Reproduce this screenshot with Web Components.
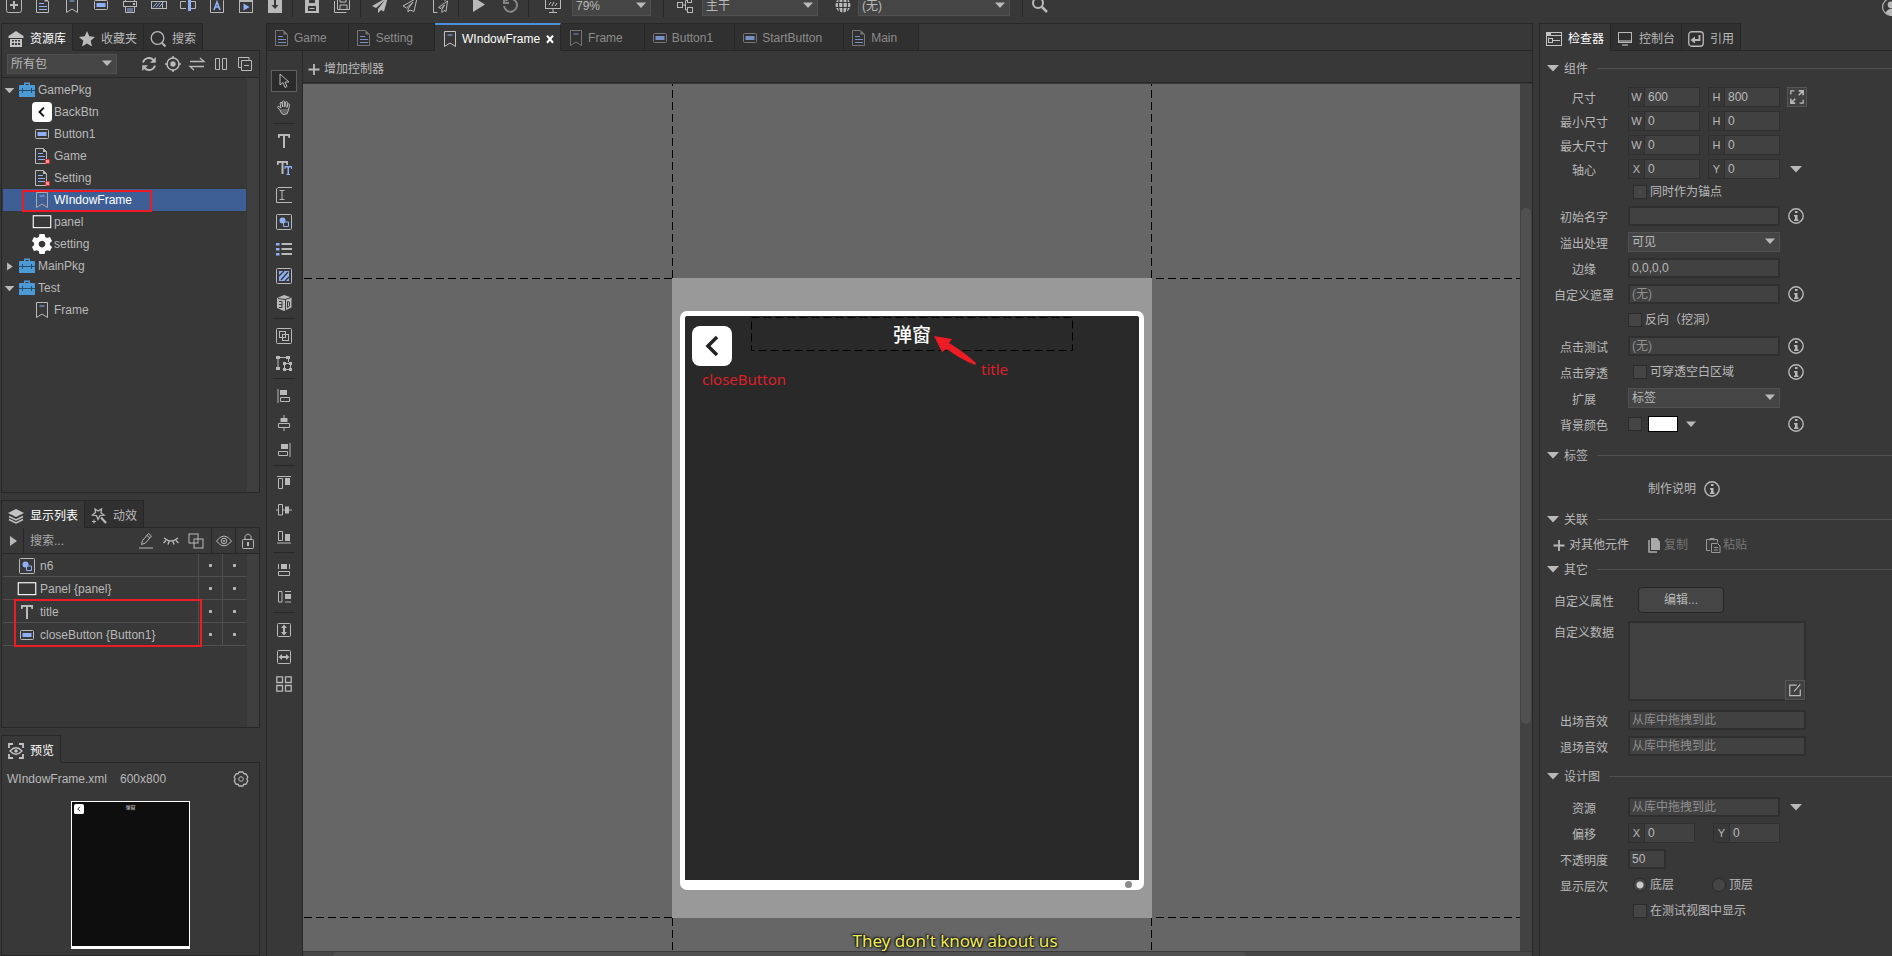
<!DOCTYPE html>
<html lang="zh-CN">
<head>
<meta charset="utf-8">
<title>UI Editor</title>
<style>
  html, body { margin: 0; height: 100%; background: #383838; }
  body {
    font: 12px/16px "Liberation Sans", "Noto Sans CJK SC", sans-serif;
    color: #b9b9b9; overflow: hidden;
    --line: #272727; --bg: #383838; --tab: #303030; --field: #414141;
    --edge: #2f2f2f; --rule: #505050; --accent: #8fb0f6; --mark: #ed1c24;
  }
</style>
</head>
<body>
<editor-app></editor-app>
<script>
const A = 'stroke="#8fb0f6" fill="none"';
const AF = 'fill="#8fb0f6" stroke="none"';
const F = 'fill="currentColor" stroke="none"';
const ICONS = {
  newbox: `<rect x=".5" y=".5" width="15" height="15" rx="2"/><path d="M8 4v8M4 8h8" stroke-width="2"/>`,
  doc: `<path d="M1.5.5h8l4 4v11h-12z"/><path d="M9.500 0l4.500 4.500h-4.500z" ${F}/><path ${A} d="M4 6.500h5M4 9.500h8M4 12.500h8"/>`,
  docdot: `<path d="M1.500.500h8l3 3.500v11.500h-11z"/><path d="M9 0l4 4h-4z" ${F}/><path ${A} d="M4 5.500h5M4 8.500h7M4 11.500h7"/><rect x="11.500" y="11.500" width="4" height="4" rx="1" fill="#f99" stroke="#f22"/>`,
  bookmark: `<path d="M2.500.500h11v15l-5.500-3.500-5.500 3.500z"/><path ${A} d="M5.500 4h5"/>`,
  button: `<rect x="1.500" y="3.500" width="13" height="9" rx="1"/><rect x="3.500" y="6" width="9" height="4" ${AF}/>`,
  combo: `<path d="M3.500 4v-3.500h9v3.500"/><rect x="1.500" y="4.500" width="13" height="5"/><path ${F} d="M11 6h2v2h-2z"/><path d="M3.500 9.500v6h9v-6"/><path ${A} d="M5 12h6M5 14h6"/>`,
  progress: `<rect x=".5" y="4.500" width="15" height="7"/><path ${A} d="M2 10.500l4-5M5 10.500l4-5M8 10.500l3-4"/><path d="M11.500 5v6"/>`,
  slider: `<path d="M6 4.500h-5.500v7h5.500M11 4.500h4.500v7h-4.500"/><path ${AF} d="M8 3h3v11h-3z"/>`,
  font: `<path d="M1.500.500h10l3 3v12h-13z"/><path ${A} stroke-width="1.600" d="M5 13l3-8 3 8M6 10h4"/>`,
  movie: `<rect x="1.500" y="2.500" width="13" height="13"/><path ${F} d="M1 0h3v3h-3zM6 0h3v3h-3zM11 0h3v3h-3zM1 3h14v2h-14z"/><path ${AF} d="M5.500 6.500l6 3.500-6 3.500z"/>`,
  download: `<path ${F} d="M1 0h14v16h-14z"/><path stroke="#383838" stroke-width="2" d="M8 3v6"/><path fill="#383838" stroke="none" d="M4.500 8h7l-3.500 4z"/>`,
  save: `<path ${F} fill-rule="evenodd" d="M1 0h12l2 2v14h-14zM5 1v5h6v-5zM4 9v5h8v-5z"/><path d="M5.500 11.500h5"/>`,
  saveall: `<path d="M3.500 1.500h10l2 2v9h-12zM6 2v3h6v-3M6 12v-4h7v4"/><path d="M.5 4v11.500h12"/>`,
  plane: `<path ${F} d="M16 0L0 9l4 2 9-8-7 9v4l3-3 3 1.500z"/>`,
  planeo: `<path d="M15 1L1 9l3.500 2 6.500-6-5 7v3l2-2 4 1.500z"/>`,
  docplane: `<path d="M8 .5h-6.500v15h4M13 1v3"/><path d="M15.500 4l-9 6.500 2.500 1 3.500-3.500-2.500 4.500v3l2-2 2 1z"/>`,
  play: `<path ${F} d="M2 0v15l12-7.500z"/>`,
  undo: `<path opacity=".6" stroke-width="2" d="M3.500 4a6.500 6.500 0 1 1-1.500 5M2 1v5h5"/>`,
  screen: `<rect x=".5" y="2.500" width="15" height="9"/><path d="M4 8l2-3M7 9l2-4M10 9l2-3M8 12v3M4 15.500h8"/>`,
  branch: `<rect x=".5" y="5.500" width="5" height="5"/><rect x="10.500" y="1.500" width="4" height="4"/><rect x="10.500" y="10.500" width="5" height="5"/><path d="M6 8h2.500M8.500 4v9h2M8.500 3.500h2"/>`,
  globe: `<circle cx="8" cy="8" r="7.500" ${F}/><path stroke="#383838" stroke-width="1.200" d="M8 0v16M0 5.500h16M0 10.500h16M5 .500q-3 7.500 0 15M11 .500q3 7.500 0 15"/>`,
  find: `<circle cx="6" cy="6" r="5" stroke-width="2"/><path stroke-width="2.500" d="M10 10l5 5"/>`,
  user: `<circle cx="8" cy="8" r="7.500"/><circle cx="8" cy="6" r="3" ${F}/><path ${F} d="M3 13q5-7 10 0l-5 3z"/>`,
  house: `<path ${F} fill-rule="evenodd" d="M8 0l7.500 5v2h-15v-2zM2 8h12v8h-12zM4 9v1.500h2v-1.500zM7 9v1.500h2v-1.500zM10 9v1.500h2v-1.500zM4 12v2h2v-2zM7 12v2h2v-2zM10 12v2h2v-2z"/>`,
  star: `<path ${F} d="M8 0l2.300 5.300 5.700.600-4.300 3.800 1.300 5.800-5-3-5 3 1.300-5.800-4.300-3.800 5.700-.600z"/>`,
  search: `<circle cx="7.500" cy="7" r="6.300" stroke-width="1.300"/><path stroke-width="2" d="M12 12l3.500 3.500"/>`,
  refresh: `<path stroke-width="1.900" d="M2 6.500a6.200 6.200 0 0 1 10.500-2.500M14 9.500a6.200 6.200 0 0 1-10.500 2.500"/><path ${F} d="M14.800 1v5.800h-5.800zM1.200 15v-5.800h5.800z"/>`,
  target: `<circle cx="8" cy="8" r="6" stroke-width="1.500"/><circle cx="8" cy="8" r="2.700" ${F}/><path stroke-width="1.500" d="M8 0v3M8 13v3M0 8h3M13 8h3"/>`,
  swap: `<path stroke-width="1.300" d="M1 5.500h14l-4-3.500M15 10.500h-14l4 3.500"/>`,
  columns: `<path d="M2.500 2.500h4v11h-4zM9.500 2.500h4v11h-4z"/>`,
  collapse: `<path d="M12 4v-2.500h-10.500v10h2.500"/><path d="M4.500 4.500h10v10h-10zM7 9.500h5"/>`,
  cursor: `<path d="M4 1v11l3-2.500 2 5 2-1-2-4.500h4z"/>`,
  hand: `<path d="M4 10l-2.500-2.500q0-1.500 1.500-1l2 1.500-1-5q1-1.500 2 0l.8 4-.3-5.500q1-1.200 2 0l.3 5.500.8-5q1.200-1 1.900.300l-.6 5.200 1-3.500q1.200-.800 1.700.500l-1.200 6q-.500 4-3.900 4h-1q-2 0-3.500-4.500z"/><path ${F} opacity=".35" d="M4 9h8.500l-1 4.500-3 1.500-2.500-1z"/>`,
  text: `<path ${F} d="M2 1h12v4h-1.500l-.500-2h-3v12h-2v-12h-3l-.500 2h-1.500z"/>`,
  rich: `<path ${F} d="M1 1h11v4h-1.500l-.500-2h-2.500v11h-2v-11h-2.500l-.500 2h-1.500z"/><path fill="#383838" stroke="none" d="M8 5.500h8v10h-8z"/><path ${AF} d="M8.500 6h7.500v3h-1v-1.500h-2v6.500h1v1h-3.500v-1h1v-6.500h-2v1.500h-1z"/>`,
  input: `<path d="M16 .500h-14l-1.500 1.500v13.500h15.500M3.500 3.500h5M3.500 12.500h5M6 3.500v9"/>`,
  group: `<rect x=".5" y=".5" width="15" height="15" rx="1"/><circle cx="6.500" cy="6.500" r="3" ${AF}/><path ${A} d="M8 8h4.500v4.500h-5v-3.500"/>`,
  list: `<path ${AF} d="M0 2h3.500v2.500h-3.500zM0 7h3.500v2.500h-3.500zM0 12h3.500v2.500h-3.500z"/><path ${F} d="M5.500 2h10.500v2h-10.500zM5.500 7h10.500v2h-10.500zM5.500 12h10.500v2h-10.500z"/>`,
  hatch: `<rect x=".5" y=".5" width="15" height="15" rx="1"/><rect x="3" y="3" width="10" height="10" ${AF}/><path stroke="#383838" stroke-width="1.400" d="M3 8l5-5M5 12l7-8M9 13l4-4"/>`,
  cube: `<path ${F} d="M1 3l7-3 7.500 2.500v10l-7.500 3.500-7-3z"/><path stroke="#383838" d="M2 3.500l7 1 6-2M9.500 4.500v11M3 6.500h3v6h-3M3 9.500h3M11.500 6.500v6l2-1.500v-4z"/>`,
  overlap: `<rect x="1" y="1" width="9" height="9"/><rect x="6" y="6" width="9" height="9"/>`,
  boxover: `<rect x=".5" y=".5" width="15" height="15" rx="1"/><rect x="3.500" y="3.500" width="6" height="6"/><rect x="6.500" y="6.500" width="6" height="6"/>`,
  transform: `<path d="M2 3.500v10M3 2.500h8M12.500 3v4"/><path ${F} d="M0 1h4v3h-4zM10 1h4v3h-4zM0 12h4v3h-4z"/><rect x="8.500" y="8.500" width="6" height="6"/><path ${F} d="M7 7h3v3h-3zM13 7h3v3h-3zM7 13h3v3h-3zM13 13h3v3h-3z"/>`,
  alleft: `<path d="M2 1v14M4.500 9.500h9v4h-9z"/><path ${F} d="M4 2h7v5h-7z"/>`,
  alcenter: `<path d="M8 0v4M8 13v3M2.500 8.500h11v4h-11z"/><path ${F} d="M4.500 3h7v4h-7z"/>`,
  alright: `<path d="M14 1v14M2.500 9.500h9v4h-9z"/><path ${F} d="M5 2h7v5h-7z"/>`,
  altop: `<path d="M1 1.500h14M2.500 3.500h4v10h-4z"/><path ${F} d="M9 3h5v7h-5z"/>`,
  almid: `<path d="M0 8h3M7 8h9M2.500 2.500h4v10.500h-4z"/><path ${F} d="M9 4.500h4v7h-4z"/>`,
  albottom: `<path d="M1 14h14M2.500 2.500h4v9h-4z"/><path ${F} d="M9 5h5v7h-5z"/>`,
  disth: `<path d="M2.500 2v5M13.500 2v5M2.500 9.500h11v4h-11z"/><path ${F} d="M5 2h6v5h-6z"/>`,
  distv: `<path d="M9 2.500h6M9 13h6M2.500 2.500h3.500v10.500h-3.500z"/><path ${F} d="M9 5h6v5h-6z"/>`,
  sizev: `<rect x="1.500" y="1.500" width="13" height="13" rx="1"/><path stroke-width="2" d="M8 5v6"/><path ${F} d="M5 6l3-3.500 3 3.500zM5 10l3 3.500 3-3.500z"/>`,
  sizeh: `<rect x="1.500" y="1.500" width="13" height="13" rx="1"/><path stroke-width="2" d="M5 8h6"/><path ${F} d="M6 5l-3.500 3 3.500 3zM10 5l3.500 3-3.500 3z"/>`,
  four: `<path stroke-width="1.300" d="M.8.800h5.700v5.700h-5.700zM9.500.800h5.700v5.700h-5.700zM.8 9.500h5.700v5.700h-5.700zM9.500 9.500h5.700v5.700h-5.700z"/>`,
  box: `<path fill="#4d9bd6" stroke="none" d="M5 3v-2.500h6v2.500h4q1 0 1 1v4h-16v-4q0-1 1-1zM6.500 2v1h3v-1zM0 9h16v6h-16z"/><path stroke="#24506f" d="M3.500 6v5M12.500 6v5M0 8.500h16"/>`,
  back: `<rect width="16" height="16" rx="3" fill="#fff" stroke="none"/><path stroke="#111" stroke-width="1.500" d="M9.500 4.500l-3.500 3.500 3.500 3.500"/>`,
  panel: `<rect x="1" y="3" width="14" height="9.500" stroke="#fff" stroke-width=".9"/>`,
  cog: `<path fill="#fff" stroke="none" fill-rule="evenodd" d="M6 0h4l.6 2.300 1.500.8 2.300-.7 1.600 3.200-1.700 1.600v1.600l1.700 1.600-1.600 3.200-2.300-.7-1.500.8-.6 2.300h-4l-.6-2.300-1.500-.8-2.300.7-1.600-3.200 1.700-1.600v-1.600l-1.700-1.600 1.600-3.200 2.300.7 1.500-.8zM8 5.300a2.700 2.700 0 1 0 .01 0z"/>`,
  gear: `<path stroke-width="1.300" stroke-linejoin="round" d="M6 1h4l.8 1.800 2-.2 2 3.400-1 2 1 2-2 3.400-2-.2-.8 1.800h-4l-.8-1.800-2 .2-2-3.400 1-2-1-2 2-3.400 2 .2z"/><circle cx="8" cy="8" r="2.300"/>`,
  layers: `<path ${F} d="M8 1l8 4-8 4-8-4z"/><path stroke-width="1.500" d="M1 8.500l7 3.500 7-3.500M1 11.500l7 3.500 7-3.500"/>`,
  wand: `<path stroke-width="1.300" d="M4 1l3 2 3.500-2-.5 4 3 2-4 .500-2 4-1.500-4-4-.500 3-2.500z"/><path stroke-width="2.200" d="M10 9.500l5 5.500"/><path d="M3 11.500v4M1 13.500h4"/>`,
  pencil: `<path d="M3.500 11.500l1-4 6-7 3 2.500-6 7zM1 15h14M9 2.500l3 2.500"/>`,
  lash: `<path stroke-width="1.400" d="M1 5q7 6 14 0M3 7.500l-2.500 2.500M6 8.500l-1 3M10 8.500l1 3M13 7.500l2.500 2.500"/>`,
  eye: `<path d="M.5 8q7.500-10 15 0q-7.500 10-15 0z"/><circle cx="8" cy="8" r="2.800"/><circle cx="8" cy="8" r="1" ${F}/>`,
  lock: `<rect x="2.500" y="6.500" width="11" height="9" rx="1"/><path d="M5 6.500v-3q3-5 6 0v3"/><path stroke-width="2" d="M8 9v4"/>`,
  lookup: `<path stroke-width="1.800" d="M1 5v-4h4M11 1h4v4M15 11v4h-4M5 15h-4v-4"/><path stroke-width="1.300" d="M2 8q6-6.500 12 0q-6 6.500-12 0z"/><circle cx="8" cy="8" r="1.800" ${F}/>`,
  inspect: `<rect x=".5" y="1.500" width="15" height="13"/><path d="M0 4.500h16M2.500 6.500v5M7 9.500h7"/><rect x="2.500" y="7.500" width="4" height="4"/><path ${F} d="M1 2h4v2h-4z"/>`,
  monitor: `<rect x="1.500" y="1.500" width="13" height="10"/><path ${F} opacity=".6" d="M2 9h12v2h-12zM5 13h6v2h-6z"/>`,
  ref: `<rect x=".75" y=".75" width="14.500" height="14.500" rx="3" stroke-width="1.300"/><path stroke-width="1.800" d="M11.500 4v5h-6"/><path ${F} d="M7 5.500v7l-4.500-3.500z"/>`,
  info: `<circle cx="8" cy="8" r="7.200" stroke-width="1.400"/><path ${F} d="M7 3h2.500v2h-2.500zM6 7h3.500v4.500h1v1.500h-4.500v-1.500h1v-3h-1z"/>`,
  expand: `<path stroke-width="1.500" d="M1 5v-4h4M15 11v4h-4"/><path stroke-width="1.800" d="M10 1h5v5M15 1l-5 5M6 15h-5v-5M1 15l5-5"/>`,
  copy: `<path ${F} d="M5 1h6l3 3.500v8.500h-9z"/><path stroke-width="1.500" d="M3 3v12h8"/>`,
  paste: `<path d="M5 13.500h-3.500v-11h11v3M5 3.500v-2h4v2"/><path d="M6.500 6.500h6l2.500 2.500v6.500h-8.500zM9 10.500h4M9 13h4"/>`,
  plus: `<path stroke-width="1.800" d="M8 3v11M2.500 8.500h11"/>`,
  edit: `<path stroke-width="1.400" d="M10 2.500h-8v12h12v-7M7 9.500l7-8"/>`,
  close: `<path stroke-width="2.800" d="M4 3.500l8 9.500M12 3.500l-8 9.500"/>`,
  down: `<path ${F} d="M2 5h12l-6 6.500z"/>`,
  downs: `<path ${F} d="M3 5.500h10l-5 5.500z"/>`,
  right: `<path ${F} d="M5 3l7 5-7 5z"/>`
};

/* Registers an element whose shadow root is cloned from one template. */
function element(name, css, html, setup) {
  const template = document.createElement('template');
  template.innerHTML = `<style>*{box-sizing:border-box}:host([hidden]){display:none}${css}</style>${html}`;
  customElements.define(name, class extends HTMLElement {
    constructor() {
      super();
      this.attachShadow({ mode: 'open' }).append(template.content.cloneNode(true));
    }
    connectedCallback() { if (setup && !this.ready) { this.ready = true; setup(this, this.shadowRoot); } }
  });
}

const CONTROLS = `
  button{font:inherit;color:inherit;background:none;border:0;padding:0;margin:0;display:flex;align-items:center;justify-content:center}
  input,textarea,select{font:inherit;color:inherit;margin:0;border-radius:0;outline:0}
  ::placeholder{color:#8f8f8f;opacity:1}
`;

element('ui-icon',
  `:host{display:block;flex:none;width:var(--size,16px);height:var(--size,16px)}
   svg{display:block;width:100%;height:100%;overflow:visible}`,
  `<svg viewBox="0 0 16 16" fill="none" stroke="currentColor" aria-hidden="true"></svg>`,
  (host, root) => { root.querySelector('svg').innerHTML = ICONS[host.getAttribute('name')] || ''; });

element('ui-select', CONTROLS +
  `:host{display:block;position:relative;width:var(--w,152px);flex:none}
   select{appearance:none;display:block;width:100%;height:20px;background:#454545;border:1px solid #505050;padding:0 20px 0 3px}
   ui-icon{position:absolute;right:2px;top:1px;pointer-events:none}`,
  `<select><option></option></select><ui-icon name="downs"></ui-icon>`,
  (host, root) => {
    root.querySelector('option').textContent = host.getAttribute('value');
    root.querySelector('select').setAttribute('aria-label', host.getAttribute('label'));
  });

/* ---- top tool bar ---- */
element('tool-group', CONTROLS +
  `:host{display:flex}button{width:var(--step);height:24px}`, ``,
  (host, root) => host.getAttribute('icons').split(' ').forEach(n => {
    const b = document.createElement('button');
    b.title = n; b.innerHTML = `<ui-icon name="${n}"></ui-icon>`; root.append(b);
  }));

element('tool-bar',
  `:host{display:flex;align-items:flex-end;overflow:hidden}
   .row{display:flex;align-items:center;height:36px;flex:1;min-width:0;margin-left:-1px}
   i{width:1px;height:24px;background:var(--line);margin:0 4px 0 3px}
   ui-select{margin:2px 9px 0 0}
   .user{margin:4px -8px 0 auto}`,
  `<div class="row">
     <tool-group style="--step:29px" icons="newbox doc bookmark button combo progress slider font movie download"></tool-group><i></i>
     <tool-group style="--step:30px" icons="save saveall"></tool-group><i></i>
     <tool-group style="--step:30px" icons="plane planeo docplane"></tool-group><i></i>
     <tool-group style="--step:31px" icons="play undo"></tool-group><i></i>
     <tool-group style="--step:39px" icons="screen"></tool-group>
     <ui-select style="--w:79px" value="79%" label="缩放"></ui-select><i></i>
     <tool-group style="--step:34px" icons="branch"></tool-group>
     <ui-select style="--w:116px" value="主干" label="分支"></ui-select>
     <tool-group style="--step:31px" icons="globe"></tool-group>
     <ui-select style="--w:152px" value="(无)" label="语言"></ui-select><i></i>
     <tool-group style="--step:26px" icons="find"></tool-group>
     <ui-icon class="user" name="user" style="--size:18px"></ui-icon>
   </div>`);

/* ---- docked panels ---- */
element('dock-panel',
  `:host{display:flex;flex-direction:column;min-height:0;min-width:0}
   .tabs{display:flex;height:28px;flex:none;border-left:1px solid var(--line)}
   .rest{flex:1;border-bottom:1px solid var(--line)}
   .body{flex:1;min-height:0;display:flex;flex-direction:column;border:1px solid var(--line);border-top:0}
   :host([full]) .rest{border-top:1px solid var(--line);border-right:1px solid var(--line)}
   :host([open]) .body{border-bottom:0}
   :host([edge]) .body{border-right:0;border-bottom:0}`,
  `<div class="tabs" role="tablist"><slot name="tab"></slot><div class="rest"></div></div><div class="body"><slot></slot></div>`);

element('dock-tab', CONTROLS +
  `:host{display:flex}
   button{gap:6px;padding:3px 6px 0;white-space:nowrap;background:var(--tab);border:solid var(--line);border-width:1px 1px 1px 0}
   :host([active]) button{background:var(--bg);border-bottom-color:var(--bg);color:#fff}
   :host([active]) ui-icon{color:#c4c4c4}
   :host([doc]) button{gap:4px;padding:2px 21px 0 7px;color:#8c8c8c}
   :host([doc]) .lead{opacity:.75}
   :host([doc][active]) button{color:#fff;border-top:2px solid #4a90d9;padding-right:4px}
   :host([doc][active]) .lead{opacity:1}
   :host([doc][active]) .x{color:#fff;--size:12px}
   .x{display:none}:host([doc][active]) .x{display:block}`,
  `<button role="tab"><ui-icon class="lead"></ui-icon><slot></slot><ui-icon class="x" name="close"></ui-icon></button>`,
  (host, root) => {
    const old = root.querySelector('.lead'), icon = document.createElement('ui-icon');
    icon.className = 'lead'; icon.setAttribute('name', host.getAttribute('icon')); old.replaceWith(icon);
    root.querySelector('button').setAttribute('aria-selected', host.hasAttribute('active'));
  });

element('tree-row', CONTROLS +
  `:host{display:block;position:relative}
   button{width:100%;height:22px;justify-content:flex-start;padding-left:29px;gap:2px}
   .main{width:20px;display:grid;place-items:center}
   :host([folder]) button{padding-left:0;gap:3px}
   :host([folder]) .main{width:16px}
   .arrow{display:none;--size:13px}:host([folder]) .arrow{display:block}
   :host([selected]) button{background:#3e5f96;color:#fff}
   .mark{display:none;position:absolute;left:19px;top:1px;width:130px;height:22px;border:2px solid var(--mark)}
   :host([selected]) .mark{display:block}
   :host([selected]) .main{color:#aaa}`,
  `<button role="treeitem"></button><span class="mark"></span>`,
  (host, root) => {
    const g = k => host.getAttribute(k);
    root.querySelector('button').innerHTML =
      `<ui-icon class="arrow" name="${g('folder') || 'down'}"></ui-icon><span class="main"><ui-icon name="${g('icon')}" style="--size:${g('size') || 16}px"></ui-icon></span><span>${g('text')}</span>`;
  });

element('library-panel', CONTROLS +
  `:host{display:flex;flex-direction:column;flex:1;min-height:0}
   .filter{display:flex;align-items:center;height:27px;padding-left:5px;border-bottom:1px solid var(--line)}
   ui-select{--w:110px;margin-right:20px}
   .filter button{width:24px;height:24px}
   .tree{flex:1;display:grid;grid-template-columns:1fr 13px}
   .rows{padding:1px 0 0 1px}.track{background:#3f3f3f;margin-left:1px}`,
  `<div class="filter"><ui-select value="所有包" label="包"></ui-select>
     <button title="刷新"><ui-icon name="refresh"></ui-icon></button><button title="定位"><ui-icon name="target"></ui-icon></button>
     <button title="交换"><ui-icon name="swap"></ui-icon></button><button title="分栏"><ui-icon name="columns"></ui-icon></button>
     <button title="折叠"><ui-icon name="collapse"></ui-icon></button></div>
   <div class="tree"><div class="rows" role="tree">
     <tree-row folder="down" icon="box" text="GamePkg"></tree-row>
     <tree-row icon="back" size="20" text="BackBtn"></tree-row>
     <tree-row icon="button" text="Button1"></tree-row>
     <tree-row icon="docdot" text="Game"></tree-row>
     <tree-row icon="docdot" text="Setting"></tree-row>
     <tree-row icon="bookmark" text="WIndowFrame" selected></tree-row>
     <tree-row icon="panel" size="20" text="panel"></tree-row>
     <tree-row icon="cog" size="20" text="setting"></tree-row>
     <tree-row folder="right" icon="box" text="MainPkg"></tree-row>
     <tree-row folder="down" icon="box" text="Test"></tree-row>
     <tree-row icon="bookmark" text="Frame"></tree-row>
   </div><div class="track"></div></div>`);

element('display-list', CONTROLS +
  `:host{display:flex;flex-direction:column;flex:1;min-height:0}
   .head{display:flex;height:26px;border-bottom:1px solid var(--line)}
   .head button{width:25px}
   .head .go{width:22px;border-right:1px solid var(--line)}
   .head input{width:110px;flex:1;min-width:0;background:none;border:0;padding:0 6px}
   .head input::placeholder{color:#a8a8a8}
   .head .flag{width:24px;border-left:1px solid var(--line)}
   .head .ovl{margin-right:3px}
   .list{flex:1;display:grid;grid-template-columns:1fr 13px;align-items:stretch}
   .track{background:#3f3f3f;margin-left:1px}
   .wrap{position:relative;padding-left:1px}
   table{width:100%;border-spacing:0;table-layout:fixed}
   td{height:23px;padding:1px 0 0;border-bottom:1px solid var(--rule)}
   td+td{width:24px;border-left:1px solid var(--rule)}
   .item{display:flex;align-items:center;gap:3px;padding-left:14px}
   .ico{width:20px;height:20px;display:grid;place-items:center}
   .dot{width:3px;height:3px;border-radius:1px;background:#bbb;margin:auto}
   .mark{position:absolute;left:12px;top:45px;width:188px;height:48px;border:2px solid var(--mark)}`,
  `<div class="head"><button class="go" title="展开"><ui-icon name="right"></ui-icon></button>
     <input aria-label="搜索" placeholder="搜索...">
     <button title="编辑"><ui-icon name="pencil"></ui-icon></button><button title="隐藏"><ui-icon name="lash"></ui-icon></button>
     <button class="ovl" title="叠放"><ui-icon name="overlap"></ui-icon></button>
     <button class="flag" title="可见"><ui-icon name="eye"></ui-icon></button><button class="flag" title="锁定"><ui-icon name="lock"></ui-icon></button></div>
   <div class="list"><div class="wrap"><table><colgroup><col><col style="width:24px"><col style="width:24px"></colgroup><tbody></tbody></table><div class="mark"></div></div><div class="track"></div></div>`,
  (host, root) => {
    root.querySelector('tbody').innerHTML = [['group', 'n6', 16], ['panel', 'Panel {panel}', 20], ['text', 'title', 16], ['button', 'closeButton {Button1}', 16]]
      .map(([i, t, s]) => `<tr><td><div class="item"><span class="ico"><ui-icon name="${i}" style="--size:${s}px"></ui-icon></span><span>${t}</span></div></td><td><div class="dot"></div></td><td><div class="dot"></div></td></tr>`).join('');
  });

element('preview-panel', CONTROLS +
  `:host{display:block}
   .info{display:flex;align-items:center;height:32px;padding:0 9px 0 5px;gap:13px}
   .info button{margin-left:auto;width:18px;height:18px}
   .thumb{position:relative;width:119px;height:148px;margin:6px auto 0;background:#0e0e0e;border:1px solid #fff;border-bottom-width:3px;
     text-align:center;font-size:5px;line-height:8px;color:#ddd;padding-top:1px}
   .thumb ui-icon{position:absolute;left:2px;top:2px;--size:10px}`,
  `<div class="info"><span>WIndowFrame.xml</span><span>600x800</span><button title="设置"><ui-icon name="gear"></ui-icon></button></div>
   <div class="thumb"><ui-icon name="back"></ui-icon>弹窗</div>`);

/* ---- centre: tool strip and design canvas ---- */
element('tool-strip', CONTROLS +
  `:host{display:flex;flex-direction:column;align-items:center;padding:16px 1px 0 0;border-right:1px solid var(--line)}
   button{width:26px;height:22px;margin:3px 0 2px}
   button.on{border:1px solid #606060;background:#2b2b2b}
   i{width:22px;height:1px;background:var(--line);margin:2px 0 3px}`, ``,
  (host, root) => root.innerHTML += 'cursor hand | text rich input group list hatch cube | boxover transform | alleft alcenter alright | altop almid albottom | disth distv | sizev sizeh four'
    .split(' ').map(n => n === '|' ? '<i></i>' : `<button title="${n}"${n === 'cursor' ? ' class="on"' : ''}><ui-icon name="${n}"></ui-icon></button>`).join(''));

element('design-stage', CONTROLS +
  `:host{display:block;position:relative;background:#999}
   .frame,.title,.close,.dot,.note,svg{position:absolute}
   .frame{left:8px;top:33px;width:464px;height:579px;background:#292929;border:5px solid #fff;border-bottom-width:10px;border-radius:7px}
   .title{left:79px;top:39px;width:322px;height:34px;display:grid;place-items:center;font:500 19px/28px "Noto Sans CJK SC",sans-serif;color:#fff}
   .title svg{inset:0;width:100%;height:100%}
   .close{left:20px;top:48px;width:40px;height:40px;border-radius:8px;background:#fff}
   .close svg{position:static}
   .dot{left:453px;top:603px;width:7px;height:7px;border-radius:50%;background:#8c8c8c}
   .note{font:15px/20px "Noto Sans","Open Sans",sans-serif;color:#dd1f27}
   .arrow{left:261px;top:57px}`,
  `<div class="frame"></div>
   <div class="title"><svg><rect x=".5" y=".5" width="321" height="33" fill="none" stroke="#000" stroke-dasharray="8 4"/></svg>弹窗</div>
   <button class="close" aria-label="closeButton"><svg width="14" height="22" viewBox="0 0 14 22"><path d="M12 2L3 11l9 9" fill="none" stroke="#222" stroke-width="3.500"/></svg></button>
   <div class="dot"></div>
   <div class="note" style="left:30px;top:91px">closeButton</div>
   <svg class="arrow" width="50" height="36" viewBox="0 0 50 36"><path d="M1 1l18 3-3 4q15 9 27 20l-1 2q-15-6-28-16l-5 3z" fill="#ed1c24"/></svg>
   <div class="note" style="left:309px;top:81px">title</div>`);

element('design-canvas',
  `:host{display:grid;position:relative;grid-template:minmax(0,1fr) 5px/minmax(0,1fr) 12px;min-width:0;min-height:0}
   .area{background:#666;overflow:hidden;display:grid;padding-left:1px;
     grid-template:194px 640px minmax(0,1fr)/minmax(0,1fr) 480px minmax(0,1fr)}
   .v{grid-column:2;border:0;--g:repeating-linear-gradient(to var(--d),#000 0 8px,transparent 8px 12px);
      background:var(--g) left/1px 100% no-repeat,var(--g) right/1px 100% no-repeat}
   .h{grid-row:2;background:var(--g) top/100% 1px no-repeat,var(--g) bottom/100% 1px no-repeat}
   .t{--d:top;grid-row:1}.b{--d:bottom;grid-row:3}
   .l{grid-column:1;--g:repeating-linear-gradient(to left,#000 0 8px,transparent 8px 12px)}
   .r{grid-column:3;--g:repeating-linear-gradient(to right,transparent 0 4px,#000 4px 12px)}
   design-stage{grid-column:2;grid-row:2}
   .vs{background:#424242;padding:124px 1px 0}
   .vs div{height:516px;background:#505050;border-radius:5px}
   .hs{grid-column:1/3;background:#454545;border-top:1px solid #3a3a3a;padding:0 286px 0 30px}
   .hs div{height:4px;background:#505050;border-radius:4px 4px 0 0}
   .sub{position:absolute;left:0;right:12px;bottom:3px;padding-left:87px;text-align:center;pointer-events:none;
     font:17px/24px "Noto Sans","Open Sans",sans-serif;color:#f0ec55;text-shadow:0 0 2px #111,1px 1px 2px #111,-1px -1px 2px #111}`,
  `<div class="area"><div class="v t"></div><div class="h l"></div><design-stage></design-stage><div class="h r"></div><div class="v b"></div></div>
   <div class="vs"><div></div></div><div class="hs"><div></div></div>
   <div class="sub">They don't know about us</div>`);

element('document-view', CONTROLS +
  `:host{display:grid;flex:1;min-height:0;grid-template:33px minmax(0,1fr)/36px minmax(0,1fr)}
   tool-strip{grid-row:1/3}
   .ctrl{border-bottom:1px solid var(--line);margin-bottom:1px;display:flex;padding-left:3px}
   .ctrl button{gap:2px;padding-top:5px}`,
  `<tool-strip></tool-strip><div class="ctrl"><button><ui-icon name="plus"></ui-icon>增加控制器</button></div><design-canvas></design-canvas>`);

/* ---- inspector ---- */
element('prop-section', CONTROLS +
  `:host{display:block}
   button{width:100%;height:24px;justify-content:flex-start;padding-left:5px;text-align:left}
   .name{margin:2px 9px 0 3px}hr{flex:1;border:0;border-top:1px solid var(--rule);margin:0}
   .body{padding:var(--top,0) 0 var(--bottom,0)}`,
  `<button aria-expanded="true"><ui-icon name="down" style="--size:16px"></ui-icon><span class="name"></span><hr></button><div class="body"><slot></slot></div>`,
  (host, root) => { root.querySelector('.name').textContent = host.getAttribute('name'); });

element('prop-row',
  `:host{display:flex;height:var(--h,26px);align-items:center}
   .name{width:88px;flex:none;text-align:center;padding-top:4px}`,
  `<div class="name"><slot name="name"></slot></div><slot></slot>`);

element('inspector-panel', CONTROLS +
  `:host{display:block;padding-top:5px}
   input:not([type]),textarea{background:var(--field);border:2px solid var(--edge);height:20px;width:152px;padding:0 2px}
   .axis{display:flex;width:72px;margin-right:8px;border:1px solid var(--edge)}
   .axis span{width:15px;text-align:center;line-height:18px;font-size:11px}
   .axis input:not([type]){flex:1;width:0;min-width:0;height:18px;border-width:0 0 0 1px;padding:0 3px}
   .wide{width:67px;margin-right:18px}
   [type=checkbox],[type=radio]{appearance:none;width:14px;height:14px;background:#454545;border:1px solid #2b2b2b;flex:none}
   [type=radio]{border-radius:50%}
   [type=radio]:checked{background:radial-gradient(circle,#c8c8c8 0 3px,#454545 4px)}
   .check{display:flex;align-items:center;gap:3px}
   .in{margin-left:5px}
   .info{margin-left:8px;width:16px;height:16px}
   .icon{margin-left:-1px;width:20px;height:20px;border:1px solid #555;background:#414141;--size:14px}
   .swatch{width:30px;height:16px;border:1px solid #000;background:#fff;margin:0 5px 0 6px}
   .end{margin-left:auto;margin-right:88px}
   .row{display:flex;align-items:center;height:24px;padding-left:11px}
   .off{color:#777}
   .row button{margin-right:17px;gap:2px}
   .act{width:86px;height:26px;margin-left:10px;border:1px solid #262626;border-radius:4px;background:#454545}
   .tall{--h:94px}
   .area{position:relative;width:178px;height:80px;margin-top:2px}
   textarea{display:block;width:100%;height:100%;resize:none}
   .area button{position:absolute;right:1px;bottom:1px}
   .snd{width:178px!important}`,
  `<prop-section name="组件" style="--top:5px;--bottom:6px">
     <div style="--h:24px">
     <prop-row><span slot="name">尺寸</span><label class="axis"><span>W</span><input value="600"></label><label class="axis"><span>H</span><input value="800"></label><button class="icon" title="适应"><ui-icon name="expand"></ui-icon></button></prop-row>
     <prop-row><span slot="name">最小尺寸</span><label class="axis"><span>W</span><input value="0"></label><label class="axis"><span>H</span><input value="0"></label></prop-row>
     <prop-row><span slot="name">最大尺寸</span><label class="axis"><span>W</span><input value="0"></label><label class="axis"><span>H</span><input value="0"></label></prop-row>
     <prop-row><span slot="name">轴心</span><label class="axis"><span>X</span><input value="0"></label><label class="axis"><span>Y</span><input value="0"></label><button title="轴心预设"><ui-icon name="down"></ui-icon></button></prop-row>
     </div>
     <prop-row style="--h:22px"><label class="check in"><input type="checkbox">同时作为锚点</label></prop-row>
     <prop-row><label slot="name" for="nm">初始名字</label><input id="nm"><button class="info" title="说明"><ui-icon name="info"></ui-icon></button></prop-row>
     <prop-row><span slot="name">溢出处理</span><ui-select value="可见" label="溢出处理"></ui-select></prop-row>
     <prop-row><label slot="name" for="mg">边缘</label><input id="mg" value="0,0,0,0"></prop-row>
     <prop-row><label slot="name" for="mk">自定义遮罩</label><input id="mk" placeholder="(无)"><button class="info" title="说明"><ui-icon name="info"></ui-icon></button></prop-row>
     <prop-row><label class="check"><input type="checkbox">反向（挖洞）</label></prop-row>
     <prop-row><label slot="name" for="ht">点击测试</label><input id="ht" placeholder="(无)"><button class="info" title="说明"><ui-icon name="info"></ui-icon></button></prop-row>
     <prop-row><span slot="name">点击穿透</span><label class="check in"><input type="checkbox">可穿透空白区域</label><button class="info end" title="说明"><ui-icon name="info"></ui-icon></button></prop-row>
     <prop-row><span slot="name">扩展</span><ui-select value="标签" label="扩展"></ui-select></prop-row>
     <prop-row><label slot="name" for="bg">背景颜色</label><input type="checkbox" id="bg"><button class="swatch" title="颜色"></button><button title="选择"><ui-icon name="downs"></ui-icon></button><button class="info end" title="说明"><ui-icon name="info"></ui-icon></button></prop-row>
   </prop-section>
   <prop-section name="标签" style="--top:9px;--bottom:5px">
     <prop-row><span style="margin-left:20px">制作说明</span><button class="info" title="说明"><ui-icon name="info"></ui-icon></button></prop-row>
   </prop-section>
   <prop-section name="关联" style="--top:2px">
     <div class="row"><button><ui-icon name="plus"></ui-icon>对其他元件</button><button class="off"><ui-icon name="copy" style="color:#aaa"></ui-icon>复制</button><button class="off"><ui-icon name="paste" style="color:#999"></ui-icon>粘贴</button></div>
   </prop-section>
   <prop-section name="其它" style="--top:6px;--bottom:5px">
     <prop-row><span slot="name">自定义属性</span><button class="act">编辑...</button></prop-row>
     <prop-row class="tall"><label slot="name" for="cd" style="display:block;height:75px">自定义数据</label><div class="area"><textarea id="cd"></textarea><button class="icon" title="编辑"><ui-icon name="edit"></ui-icon></button></div></prop-row>
     <prop-row><label slot="name" for="s1">出场音效</label><input class="snd" id="s1" placeholder="从库中拖拽到此"></prop-row>
     <prop-row><label slot="name" for="s2">退场音效</label><input class="snd" id="s2" placeholder="从库中拖拽到此"></prop-row>
   </prop-section>
   <prop-section name="设计图" style="--top:6px">
     <prop-row><label slot="name" for="rs">资源</label><input id="rs" placeholder="从库中拖拽到此"><button class="info" title="选择"><ui-icon name="down"></ui-icon></button></prop-row>
     <prop-row><span slot="name">偏移</span><label class="axis wide"><span>X</span><input value="0"></label><label class="axis wide"><span>Y</span><input value="0"></label></prop-row>
     <prop-row><label slot="name" for="op">不透明度</label><input id="op" value="50" style="width:38px"></prop-row>
     <prop-row><span slot="name">显示层次</span><label class="check in" style="width:79px"><input type="radio" name="lv" checked>底层</label><label class="check"><input type="radio" name="lv">顶层</label></prop-row>
     <prop-row><label class="check in"><input type="checkbox">在测试视图中显示</label></prop-row>
   </prop-section>`);

element('editor-app',
  `:host{display:grid;height:100vh;grid-template:23px minmax(0,1fr)/259px minmax(0,1fr) 353px;column-gap:6px;padding-left:1px;background:var(--bg)}
   tool-bar{grid-column:1/4;margin-left:-1px}
   .left{display:grid;grid-template-rows:minmax(0,1fr) 228px 221px;gap:7px;min-height:0}`,
  `<tool-bar></tool-bar>
   <div class="left">
     <dock-panel><dock-tab slot="tab" icon="house" active>资源库</dock-tab><dock-tab slot="tab" icon="star">收藏夹</dock-tab><dock-tab slot="tab" icon="search">搜索</dock-tab>
       <library-panel></library-panel></dock-panel>
     <dock-panel><dock-tab slot="tab" icon="layers" active>显示列表</dock-tab><dock-tab slot="tab" icon="wand">动效</dock-tab>
       <display-list></display-list></dock-panel>
     <dock-panel><dock-tab slot="tab" icon="lookup" active>预览</dock-tab><preview-panel></preview-panel></dock-panel>
   </div>
   <dock-panel full open>
     <dock-tab slot="tab" doc icon="doc">Game</dock-tab><dock-tab slot="tab" doc icon="doc">Setting</dock-tab>
     <dock-tab slot="tab" doc icon="bookmark" active>WIndowFrame</dock-tab><dock-tab slot="tab" doc icon="bookmark">Frame</dock-tab>
     <dock-tab slot="tab" doc icon="button">Button1</dock-tab><dock-tab slot="tab" doc icon="button">StartButton</dock-tab><dock-tab slot="tab" doc icon="doc">Main</dock-tab>
     <document-view></document-view></dock-panel>
   <dock-panel edge><dock-tab slot="tab" icon="inspect" active>检查器</dock-tab><dock-tab slot="tab" icon="monitor">控制台</dock-tab><dock-tab slot="tab" icon="ref">引用</dock-tab>
     <inspector-panel></inspector-panel></dock-panel>`);
</script>
</body>
</html>
